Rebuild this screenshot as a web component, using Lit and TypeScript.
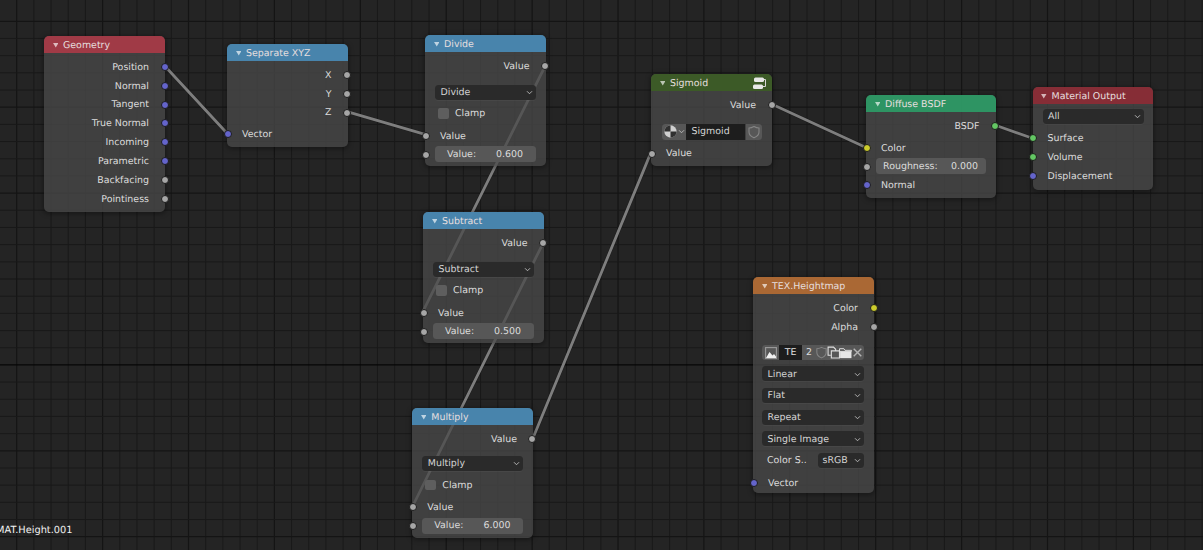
import { LitElement, html, css, svg, nothing } from "lit";
import { customElement } from "lit/decorators.js";

type Row = {
  t: string;
  label?: string;
  value?: string;
  s?: string; // socket colour class
  m?: string; // top margin class
};
type NodeDef = {
  title: string;
  head: string;
  x: number;
  y: number;
  w: number;
  h: number;
  rows: Row[];
  extra?: string;
  groupIcon?: boolean;
};

const out = (label: string, s = "gray", m = ""): Row => ({ t: "out", label, s, m });
const inp = (label: string, s = "gray", m = ""): Row => ({ t: "in", label, s, m });
const sel = (label: string, m = "m6"): Row => ({ t: "sel", label, m });
const chk = (label: string, m = "m4"): Row => ({ t: "chk", label, m });
const val = (label: string, value: string, m = ""): Row => ({ t: "val", label, value, s: "gray", m });

const mathRows = (op: string, v: string, m1 = "m10", m2 = "m4"): Row[] => [
  out("Value"),
  sel(op, m1),
  chk("Clamp", m2),
  inp("Value", "gray", "m3"),
  val("Value:", v),
];

const NODES: NodeDef[] = [
  {
    title: "Geometry", head: "h-red", x: 44, y: 36, w: 121, h: 176,
    rows: [
      out("Position", "blue"), out("Normal", "blue"), out("Tangent", "blue"), out("True Normal", "blue"),
      out("Incoming", "blue"), out("Parametric", "blue"), out("Backfacing"), out("Pointiness"),
    ],
  },
  {
    title: "Separate XYZ", head: "h-blue", x: 227, y: 44, w: 120.5, h: 103,
    rows: [out("X"), out("Y"), out("Z"), inp("Vector", "blue", "m3")],
  },
  { title: "Divide", head: "h-blue", x: 425, y: 35.4, w: 120.5, h: 130.6, rows: mathRows("Divide", "0.600") },
  { title: "Subtract", head: "h-blue", x: 423, y: 212.4, w: 120.5, h: 131, rows: mathRows("Subtract", "0.500") },
  {
    title: "Multiply", head: "h-blue", x: 412.3, y: 408, w: 120.7, h: 129.5,
    rows: mathRows("Multiply", "6.000", "m8", "m5"),
  },
  {
    title: "Sigmoid", head: "h-dgreen", x: 651, y: 74, w: 121, h: 92, groupIcon: true,
    rows: [out("Value"), { t: "block", m: "m10" }, inp("Value", "gray", "m4")],
  },
  {
    title: "Diffuse BSDF", head: "h-green", x: 866, y: 95, w: 129.5, h: 103, extra: "roomy",
    rows: [out("BSDF", "green"), inp("Color", "yellow", "m3"), val("Roughness:", "0.000"), inp("Normal", "blue")],
  },
  {
    title: "Material Output", head: "h-dred", x: 1032.5, y: 87, w: 120.5, h: 103,
    rows: [
      sel("All", "m5"), inp("Surface", "green", "m4"), inp("Volume", "green"), inp("Displacement", "blue"),
    ],
  },
  {
    title: "TEX.Heightmap", head: "h-orange", x: 753, y: 277, w: 121, h: 216, extra: "tex",
    rows: [
      out("Color", "yellow"), out("Alpha"), { t: "image", m: "m10" },
      sel("Linear"), sel("Flat"), sel("Repeat"), sel("Single Image"),
      { t: "cs", m: "m6" }, inp("Vector", "blue", "m5"),
    ],
  },
];

const WIRES: number[][] = [
  [165, 66.3, 227, 133.3],
  [347, 111.7, 425, 134.4],
  [545.5, 65.3, 423, 311.4],
  [543.5, 242.3, 412.5, 506.5],
  [533, 438, 651, 152.4],
  [772, 104.3, 866, 147.5],
  [995.5, 125.3, 1032.5, 138.3],
];

const STEP = 17.18;
const GX = 16.7;
const GY = 21.3;
const W = 1203;
const H = 550;

function gridLines() {
  const lines = [];
  for (let i = 0; GX + i * STEP < W; i++) {
    const x = GX + i * STEP;
    lines.push(svg`<line class=${i % 5 === 0 ? "major" : "minor"} x1=${x} x2=${x} y1="0" y2=${H}></line>`);
  }
  for (let i = 0; GY + i * STEP < H; i++) {
    const y = GY + i * STEP;
    const cls = i === 20 ? "top" : i % 5 === 0 ? "major" : "minor";
    lines.push(svg`<line class=${cls} x1="0" x2=${W} y1=${y} y2=${y}></line>`);
  }
  return lines;
}

const chevron = html`<svg class="chev" viewBox="0 0 8 6"><path d="M1 1.5 L4 4.5 L7 1.5"></path></svg>`;
const shield = html`<svg class="ico" viewBox="0 0 14 14"><path d="M7 1.5 C9 2.6 10.5 3 12 3 V7 C12 10 9.5 11.8 7 12.8 C4.5 11.8 2 10 2 7 V3 C3.5 3 5 2.6 7 1.5 Z"></path></svg>`;

@customElement("app-root")
export class AppRoot extends LitElement {
  static styles = css`
    :host {
      display: block;
      width: 1203px;
      height: 550px;
      overflow: hidden;
      font-family: "DejaVu Sans", sans-serif;
      font-size: 9.45px;
      text-rendering: geometricPrecision;
      color: #dcdcdc;
    }
    .canvas {
      position: relative;
      width: 1203px;
      height: 550px;
      overflow: hidden;
      background: #242424;
    }
    .layer {
      position: absolute;
      inset: 0;
      width: 1203px;
      height: 550px;
    }
    .minor { stroke: #191919; stroke-width: 1; }
    .major { stroke: #141414; stroke-width: 1.2; }
    .top { stroke: #060606; stroke-width: 1.2; }
    .wire-o { stroke: rgba(20, 20, 20, 0.4); stroke-width: 3.8; stroke-linecap: round; }
    .wire { stroke: #7e7e7e; stroke-width: 2.8; stroke-linecap: round; }
    .node {
      position: absolute;
      box-sizing: border-box;
      border-radius: 5px;
      background: rgba(74, 74, 74, 0.76);
      box-shadow: 0 1px 5px 1px rgba(0, 0, 0, 0.35);
    }
    .head {
      height: 17px;
      box-sizing: border-box;
      padding-top: 1.5px;
      margin-bottom: 4px;
      border-radius: 5px 5px 0 0;
      display: flex;
      align-items: center;
      padding-left: 8.5px;
      color: #e6dfdf;
      position: relative;
    }
    .h-red { background: rgba(168, 57, 70, 0.92); }
    .h-dred { background: rgba(138, 44, 54, 0.95); }
    .h-blue { background: rgba(73, 140, 184, 0.9); }
    .h-green { background: rgba(44, 155, 102, 0.92); }
    .h-dgreen { background: rgba(60, 92, 38, 0.95); }
    .h-orange { background: rgba(176, 106, 52, 0.95); }
    .tri { width: 5.5px; height: 4.5px; margin-right: 5px; flex: none; fill: rgba(255, 255, 255, 0.65); }
    .group { position: absolute; right: 5.5px; top: 2px; width: 15px; height: 14px; }
    .row {
      position: relative;
      height: 18.85px;
      box-sizing: border-box;
      display: flex;
      align-items: center;
      padding: 0 10px;
    }
    .m3 { margin-top: 3px; }
    .m4 { margin-top: 4.2px; }
    .m5 { margin-top: 5px; }
    .m6 { margin-top: 6.6px; }
    .m8 { margin-top: 7.8px; }
    .m10 { margin-top: 9.7px; }
    .out { justify-content: flex-end; padding-right: 16px; padding-top: 1.5px; }
    .in { padding-left: 15px; padding-top: 1.5px; }
    .sock {
      position: absolute;
      top: 50%;
      width: 6px;
      height: 6px;
      margin-top: -3.5px;
      border-radius: 50%;
      border: 0.5px solid #1c1c1c;
    }
    .out .sock { right: -3.5px; }
    .in .sock, .val .sock { left: -3.5px; }
    .gray { background: #a6a6a6; }
    .blue { background: #6464cb; }
    .yellow { background: #cccc2c; }
    .green { background: #63c763; }
    .selrow { height: 15px; padding: 0 9.5px 0 10px; }
    .tex .selrow { padding: 0 10.5px 0 9px; }
    .dd {
      flex: 1;
      height: 15px;
      border-radius: 3.5px;
      background: #2a2a2a;
      display: flex;
      align-items: center;
      justify-content: space-between;
      padding: 0.8px 3px 0 5.5px;
      box-sizing: border-box;
      color: #d4d4d4;
      box-shadow: 0 1px 0 rgba(255, 255, 255, 0.04);
    }
    .chev { width: 7px; height: 5px; fill: none; stroke: #bdbdbd; stroke-width: 1.1; flex: none; }
    .chk { padding-left: 13px; gap: 6.5px; }
    .box { width: 10.5px; height: 10.5px; border-radius: 2px; background: #5e5e5e; flex: none; }
    .val { padding: 0 9.5px 0 10px; }
    .field {
      flex: 1;
      height: 15.5px;
      border-radius: 3.5px;
      background: #575757;
      display: flex;
      align-items: center;
      justify-content: space-between;
      padding: 0 13px 0 12px;
      box-sizing: border-box;
      color: #dcdcdc;
    }
    .roomy .field { padding: 0 8px 0 7px; }
    .blk { height: 16px; padding: 0 10px 0 11px; }
    .bar { flex: 1; height: 16px; display: flex; border-radius: 3.5px; overflow: hidden; }
    .b-mat {
      width: 24px;
      background: #575757;
      display: flex;
      align-items: center;
      justify-content: center;
      gap: 1px;
    }
    .b-name {
      flex: 1;
      background: #1d1d1d;
      display: flex;
      align-items: center;
      padding-left: 5.5px;
      color: #d4d4d4;
    }
    .b-sq {
      background: #575757;
      display: flex;
      align-items: center;
      justify-content: center;
      margin-left: 1px;
      width: 16px;
    }
    .sphere { width: 13px; height: 13px; flex: none; }
    .ico { width: 14px; height: 14px; fill: none; stroke: #858585; stroke-width: 1.1; flex: none; }
    .img-row { height: 14.5px; padding: 0 10.5px 0 9px; }
    .img-row .bar { height: 14.5px; }
    .i-pic { width: 17px; background: #575757; display: flex; align-items: center; justify-content: center; }
    .i-te {
      width: 23px;
      background: #1d1d1d;
      display: flex;
      align-items: center;
      justify-content: center;
      color: #e0e0e0;
    }
    .i-num {
      width: 14px;
      background: #575757;
      display: flex;
      align-items: center;
      justify-content: center;
      color: #dcdcdc;
    }
    .i-sq {
      flex: 1;
      background: #575757;
      display: flex;
      align-items: center;
      justify-content: center;
      min-width: 0;
    }
    .i-sq svg { width: 13px; height: 13px; flex: none; }
    .csrow { height: 15px; padding: 0 10.5px 0 14px; gap: 0; }
    .cs-l { flex: 1; }
    .cs-d { flex: 0 0 46px; padding-left: 5px; }
    .corner {
      position: absolute;
      left: -4px;
      top: 524.5px;
      color: #f2f2f2;
      font-size: 9.8px;
      line-height: 12px;
      white-space: nowrap;
    }
  `;

  private renderRow(r: Row) {
    const m = r.m ?? "";
    const sock = r.s ? html`<span class="sock ${r.s}"></span>` : nothing;
    switch (r.t) {
      case "out":
        return html`<div class="row out ${m}"><span>${r.label}</span>${sock}</div>`;
      case "in":
        return html`<div class="row in ${m}">${sock}<span>${r.label}</span></div>`;
      case "sel":
        return html`<div class="row selrow ${m}"><div class="dd"><span>${r.label}</span>${chevron}</div></div>`;
      case "chk":
        return html`<div class="row chk ${m}"><span class="box"></span><span>${r.label}</span></div>`;
      case "val":
        return html`<div class="row val ${m}">${sock}<div class="field"><span>${r.label}</span><span>${r.value}</span></div></div>`;
      case "block":
        return html`<div class="row blk ${m}"><div class="bar">
          <div class="b-mat">
            <svg class="sphere" viewBox="0 0 12 12">
              <circle cx="6" cy="6" r="5.7" fill="#cfcfcf"></circle>
              <path d="M6 6 V0.3 A5.7 5.7 0 0 0 0.3 6 Z" fill="#303030"></path>
              <path d="M6 6 H11.7 A5.7 5.7 0 0 1 6 11.7 Z" fill="#303030"></path>
            </svg>
            ${chevron}
          </div>
          <div class="b-name">Sigmoid</div>
          <div class="b-sq">${shield}</div>
        </div></div>`;
      case "image":
        return html`<div class="row img-row ${m}"><div class="bar">
          <div class="i-pic">
            <svg width="12" height="12" viewBox="0 0 12 12">
              <rect x="0.6" y="0.6" width="10.8" height="10.8" fill="none" stroke="#9a9a9a" stroke-width="1.1"></rect>
              <path d="M1 11 L4.5 5 L7.5 8.5 L9 7 L11 9.5 V11 Z" fill="#f0f0f0"></path>
            </svg>
          </div>
          <div class="i-te">TE</div>
          <div class="i-num">2</div>
          <div class="i-sq">${shield}</div>
          <div class="i-sq">
            <svg viewBox="0 0 12 12" fill="none" stroke="#e0e0e0" stroke-width="1">
              <path d="M3.5 8.5 H1 V1 H6 L8 3 V4.5"></path>
              <path d="M4 4.5 H11.5 V11 H4 Z"></path>
            </svg>
          </div>
          <div class="i-sq">
            <svg viewBox="0 0 12 12">
              <path d="M0.5 2.5 H4.5 L5.5 4 H11.5 V5 H0.5 Z" fill="none" stroke="#e0e0e0" stroke-width="0.9"></path>
              <rect x="1" y="5.2" width="10.5" height="6" fill="#e6e6e6"></rect>
            </svg>
          </div>
          <div class="i-sq">
            <svg viewBox="0 0 12 12" stroke="#b4b4b4" stroke-width="1.3"><path d="M2.5 2.5 L9.5 9.5 M9.5 2.5 L2.5 9.5"></path></svg>
          </div>
        </div></div>`;
      case "cs":
        return html`<div class="row csrow ${m}"><span class="cs-l">Color S..</span><div class="dd cs-d"><span>sRGB</span>${chevron}</div></div>`;
    }
    return nothing;
  }

  private renderNode(n: NodeDef) {
    return html`<div
      class="node ${n.extra ?? ""}"
      style="left:${n.x}px;top:${n.y}px;width:${n.w}px;height:${n.h}px"
    >
      <div class="head ${n.head}">
        <svg class="tri" viewBox="0 0 6 5"><path d="M0 0 H6 L3 5 Z"></path></svg>
        <span>${n.title}</span>
        ${n.groupIcon
          ? html`<svg class="group" viewBox="0 0 15 14">
              <rect x="2" y="1.5" width="10" height="4.5" rx="1.5" fill="#e8e8e8"></rect>
              <rect x="1" y="8.5" width="10" height="4.5" rx="1.5" fill="#e8e8e8"></rect>
              <path d="M12 3.5 H13.5 V10.5 H11" fill="none" stroke="#d8d8d8" stroke-width="1"></path>
            </svg>`
          : nothing}
      </div>
      ${n.rows.map((r) => this.renderRow(r))}
    </div>`;
  }

  render() {
    return html`<div class="canvas">
      <svg class="layer" viewBox="0 0 1203 550">
        ${gridLines()}
        ${WIRES.map(
          (w) => svg`<line class="wire-o" x1=${w[0]} y1=${w[1]} x2=${w[2]} y2=${w[3]}></line>
            <line class="wire" x1=${w[0]} y1=${w[1]} x2=${w[2]} y2=${w[3]}></line>`
        )}
      </svg>
      ${NODES.map((n) => this.renderNode(n))}
      <div class="corner">MAT.Height.001</div>
    </div>`;
  }
}
